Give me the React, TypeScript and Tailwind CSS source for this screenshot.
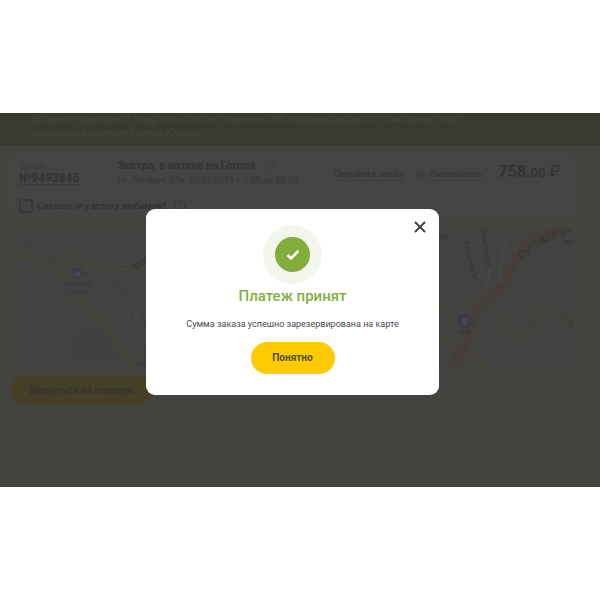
import { Check, Info, Printer, X } from 'lucide-react';

const minorStreets = [
  "M0 55L30 70L58 62L80 90",
  "M4 100L40 92L70 112L96 96",
  "M60 0L84 22L128 14",
  "M78 30L110 8",
  "M428 50L452 62L446 80",
  "M482 139L488 104L498 108",
  "M508 112V130",
  "M530 96L526 120L548 124",
  "M500 74L520 38L540 30L562 58",
  "M524 128L552 134",
];

const CityMap = () => (
  <svg
    viewBox="0 0 562 139"
    preserveAspectRatio="xMidYMid slice"
    className="block w-full bg-[#424241]"
    fill="none"
    role="img"
    aria-label="Карта"
  >
    <defs>
      <path id="lugovaya" d="M510 32Q526 12 566 3" />
    </defs>
    <path d="M60 110L90 92L118 139H56Z" fill="#414142" />
    {minorStreets.map((d) => (
      <path key={d} d={d} stroke="#444443" strokeWidth="1" />
    ))}
    <path d="M22 98Q26 108 36 112Q48 120 49 139" stroke="#474747" strokeWidth="1" />

    {/* Railway */}
    <path d="M0 4Q26 22 44 36Q54 43 78 45Q108 50 115 67C121 82 119 98 134 117V139" stroke="#3d3e3e" strokeWidth="1" />
    <path d="M134 58Q128 70 131 86Q134 100 140 110" stroke="#3d3e3e" strokeWidth="1" />

    {/* Secondary roads */}
    <g stroke="#413f3a" strokeWidth="6" strokeLinejoin="round">
      <path d="M0 24L43 38L55 27L76 38Q98 42 121 41" strokeWidth="5" />
      <path d="M43 38L82 86L124 139" />
      <path d="M428 78L450 95" strokeWidth="4" />
      <path d="M426 110L476 140" />
      <path d="M470 76L494 91Q498 108 508 109T520 97Q530 77 536 80L562 95" strokeWidth="4" />
    </g>
    <g stroke="#464339" strokeWidth="5" strokeLinejoin="round">
      <path d="M0 24L43 38L55 27L76 38Q98 42 121 41" strokeWidth="4" />
      <path d="M43 38L82 86L124 139" />
      <path d="M428 78L450 95" strokeWidth="3" />
      <path d="M426 110L476 140" />
      <path d="M470 76L494 91Q498 108 508 109T520 97Q530 77 536 80L562 95" stroke="#44423c" strokeWidth="3" />
    </g>

    {/* Main road */}
    <path d="M446 140Q455 116 459 98Q463 80 471 71C484 66 492 61 497 46Q503 29 513 18Q527 4 550 0" stroke="#463e39" strokeWidth="7" />
    <path d="M439 140L452 114" stroke="#463e39" strokeWidth="7" />

    <path d="M489 54Q488 34 492 16L504 2" stroke="#464647" strokeWidth="3" />
    <path d="M468 70Q462 60 464 48M468 70Q478 58 477 40" stroke="#464647" strokeWidth="2" />

    {/* Labels */}
    <g className="font-['Noto_Sans']" fontSize="7" fill="#343434">
      <text x="453" y="107" textAnchor="middle">ННК</text>
      <text x="424" y="11">ойл</text>
      <text x="553" y="17">Rs</text>
      <text x="557" y="100">У</text>
      <text transform="translate(452 14) rotate(75)">Сельская ул.</text>
      <text transform="translate(469 0) rotate(82)">Сельская ул.</text>
      <text fontSize="10" transform="translate(125 42) rotate(-38)">Вос</text>
      <text fontSize="11">
        <textPath href="#lugovaya">Луговая ул</textPath>
      </text>
    </g>
    <g className="font-['Noto_Sans']" fontSize="7" fill="#343a46" textAnchor="middle">
      <text x="66" y="58">Военное</text>
      <text x="66" y="66">шоссе</text>
      <text x="130" y="138">3-я</text>
    </g>
    <rect x="62" y="40" width="8" height="9" rx="1" fill="#363c47" />
    <path d="M64 43V47H68M66 43V47M68 43V48" stroke="#4b5059" />
    <circle cx="453" cy="93" r="7" fill="#3a3a45" />
    <path d="M450 90H455V97H450Z" fill="#48484f" />
    <path d="M456 90L458 92V96" stroke="#48484f" />
  </svg>
);

const OrderCard = () => (
  <div className="rounded-md bg-[#444444]">
    <div className="flex h-10 items-center pr-3.5 pb-1 pl-2">
      <div className="w-[98px] shrink-0">
        <p className="text-[9px] leading-3 text-[#383838]">Заказ</p>
        <a href="#order" className="block w-fit border-b border-[#3a3a3a] text-[12px] leading-3 font-bold">№9493845</a>
      </div>
      <div className="min-w-0 grow">
        <h2 className="flex items-center gap-2 text-[11px] leading-4 font-bold whitespace-nowrap">
          Завтра, в аптеке на Гоголя
          <Info className="size-3 text-[#3e3e3e]" strokeWidth={2} />
        </h2>
        <p className="text-[9px] leading-3 whitespace-nowrap text-[#383838]">ул. Луговая, 85в, 20.05.2019 с 9:00 до 20:00</p>
      </div>
      <a href="#details" className="mt-1 mr-3 border-b border-[#3e3e3e] text-[9px] leading-3 whitespace-nowrap">Перейти в заказ</a>
      <a href="#print" className="mt-1 mr-4 flex items-center gap-1 text-[9px] leading-3 whitespace-nowrap">
        <Printer className="size-2.5 text-[#3b3b3b]" />
        <span className="border-b border-[#3e3e3e]">Распечатать</span>
      </a>
      <p className="text-[16px] leading-5 font-bold whitespace-nowrap">
        758.<span className="text-[13px]">00</span> <span className="font-normal">₽</span>
      </p>
    </div>
    <div className="flex h-6 items-center gap-1 pl-2">
      <input
        id="favourite"
        type="checkbox"
        className="size-3.5 appearance-none rounded-xs border-2 border-[#383838]"
      />
      <label htmlFor="favourite" className="text-[9px] leading-3 font-bold">Сделать эту аптеку любимой?</label>
      <Info className="ml-1 size-3 text-[#383838]" />
    </div>
  </div>
);

const PaymentDialog = () => (
  <div
    role="dialog"
    aria-modal="true"
    aria-labelledby="payment-title"
    className="relative flex w-[293px] flex-col items-center rounded-[9px] bg-white pt-4 pb-[21px] text-[#4a4a4a]"
  >
    <button type="button" aria-label="Закрыть" className="absolute top-[9px] right-2.5 text-[#444444]">
      <X className="size-[18px]" strokeWidth={2.5} />
    </button>
    <div className="flex size-[59px] items-center justify-center rounded-full bg-[#f3f6ec]">
      <div className="flex size-[35px] items-center justify-center rounded-full bg-[#82ad3a]">
        <Check className="size-4 text-white" strokeWidth={4} strokeLinecap="butt" strokeLinejoin="miter" />
      </div>
    </div>
    <h1 id="payment-title" className="mt-0.5 text-[15px] leading-5 font-medium text-[#82b13c]">Платеж принят</h1>
    <p className="mt-3 text-[9px] leading-3">Сумма заказа успешно зарезервирована на карте</p>
    <button type="button" className="mt-3 h-8 w-[84px] rounded-full bg-[#ffcb00] text-[10px] leading-4 font-bold">
      Понятно
    </button>
  </div>
);

const App = () => {
  return (
    <div className="bg-white py-[113px] font-[Roboto,'Noto_Sans',sans-serif]">
      <div className="relative overflow-hidden bg-[#434340] pb-[82px] text-[#333333]">
        <div className="h-[33px] overflow-hidden bg-[#383c2f] pl-8 text-[9px] leading-[14px] text-[#42463d]">
          <p className="-mt-px whitespace-nowrap">
            Вы можете приобрести товар только после получения SMS, подтверждающего, что ваш заказ готов,
            <br />
            либо после появления статуса «Собран»
          </p>
        </div>
        <main className="pt-2 pr-[26px] pl-[11px]">
          <OrderCard />
          <div className="mt-2.5">
            <CityMap />
          </div>
          <button type="button" className="mt-[9px] h-[29px] w-[141px] rounded-full bg-[#453f25] text-[10px] leading-4 font-bold">
            Вернуться на главную
          </button>
        </main>
        <div className="absolute inset-0 flex items-start justify-center pt-24 pr-[15px]">
          <PaymentDialog />
        </div>
      </div>
    </div>
  );
};

export default App;
